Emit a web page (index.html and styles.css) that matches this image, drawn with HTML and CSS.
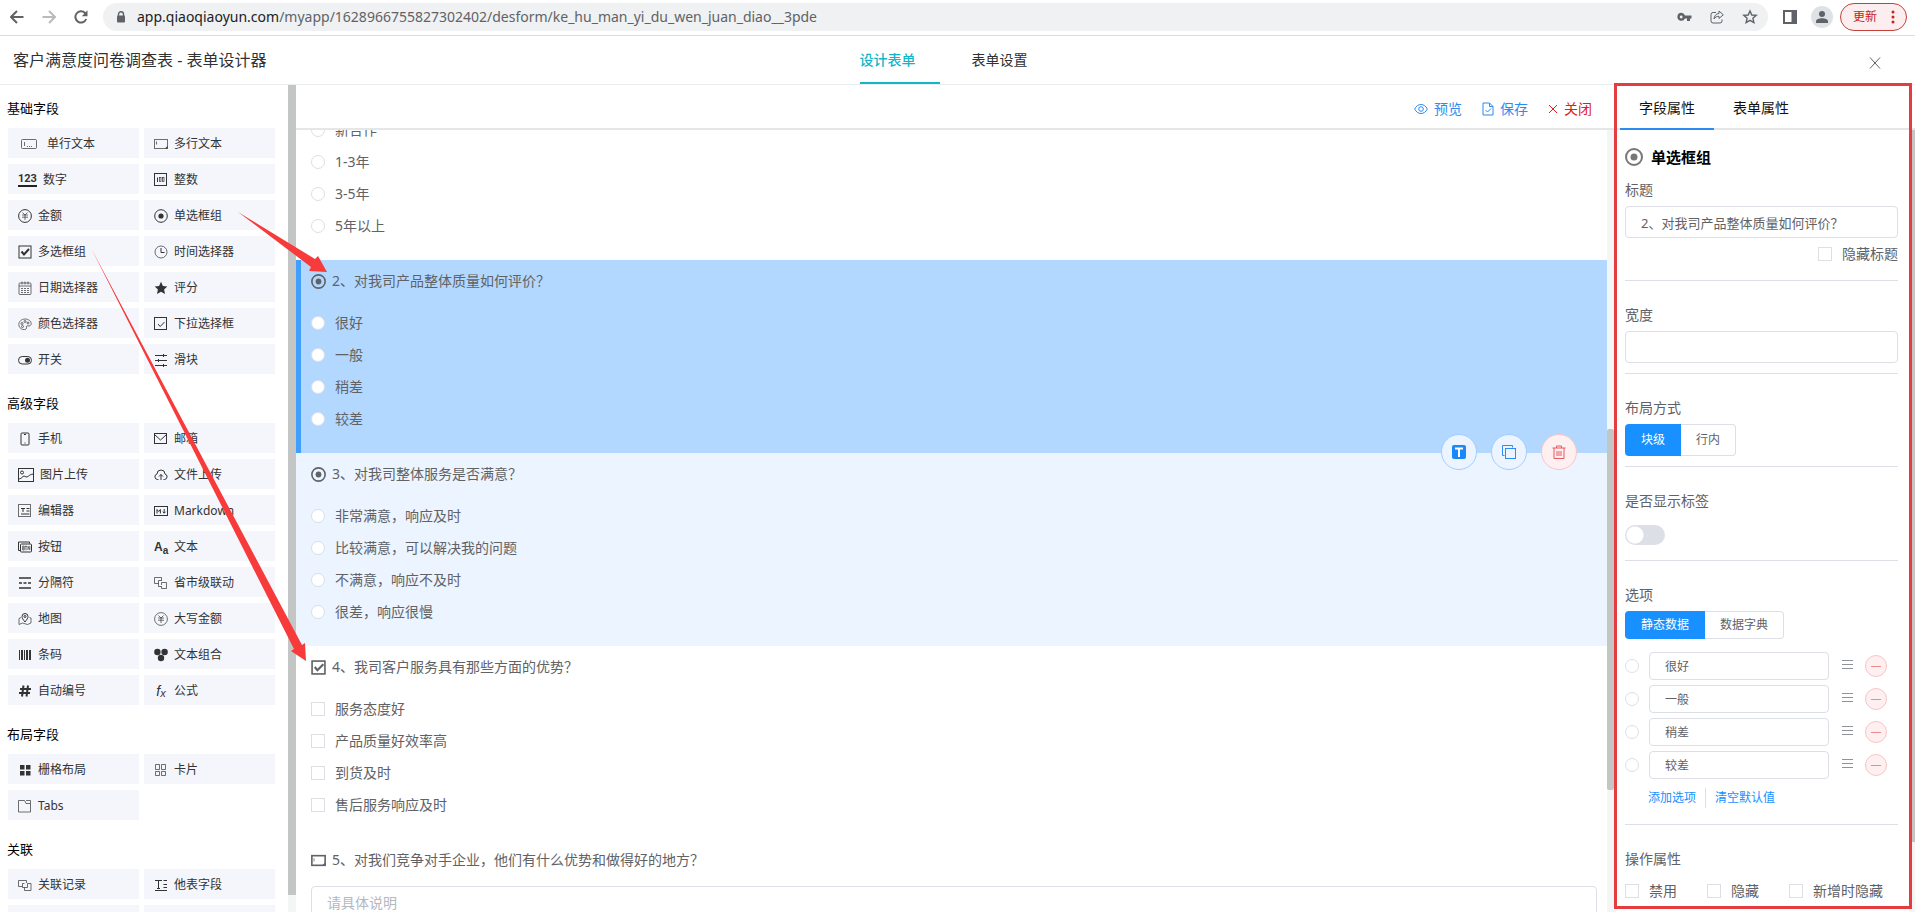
FILE: index.html
```html
<!DOCTYPE html>
<html lang="zh-CN">
<head>
<meta charset="utf-8">
<title>客户满意度问卷调查表 - 表单设计器</title>
<link rel="stylesheet" href="styles.css">
</head>
<body>
<div class="browser-bar">
  <button class="nav-btn" aria-label="后退"><svg width="14" height="14" viewBox="0 0 14 14"><path d="M13.500 7H1.500M7 1L1 7l6 6" class="ln2"/></svg></button>
  <button class="nav-btn nav-off" aria-label="前进"><svg width="14" height="14" viewBox="0 0 14 14"><path d="M.5 7h12M7 1l6 6-6 6" class="ln2"/></svg></button>
  <button class="nav-btn" aria-label="刷新"><svg width="14" height="14" viewBox="0 0 14 14"><path d="M12.200 9A5.600 5.600 0 1 1 11 3l1 1" class="ln2"/><path d="M13.500.3v6H7.800z" fill="currentColor"/></svg></button>
  <div class="url">
    <svg width="10" height="12" viewBox="0 0 10 12"><path d="M2.500 5V3.300a2.500 2.500 0 0 1 5 0V5" fill="none" stroke="currentColor" stroke-width="1.400"/><rect x="1" y="4.500" width="8" height="7" rx="1" fill="currentColor"/></svg>
    <span class="url-text"><span class="url-host">app.qiaoqiaoyun.com</span>/myapp/1628966755827302402/desform/ke_hu_man_yi_du_wen_juan_diao__3pde</span>
    <svg width="15" height="14" viewBox="0 0 15 14"><path fill="currentColor" fill-rule="evenodd" d="M4.200 2.800A4 4 0 0 1 8 5.500h6.500v3H13V11h-3V8.500H8a4 4 0 1 1-3.800-5.700zm0 2.800a1.400 1.400 0 1 0 0 2.800 1.400 1.400 0 0 0 0-2.800z"/></svg>
    <svg width="14" height="14" viewBox="0 0 14 14"><path d="M6 2.500H3a2 2 0 0 0-2 2V11a2 2 0 0 0 2 2h7a2 2 0 0 0 2-2V9.500" class="ln"/><path d="M9 1l4.300 3.800L9 8.500V6.300C6.500 6.300 5 7.300 4 9c.2-3 2-5.300 5-5.600z" class="ln"/></svg>
    <svg width="16" height="16" viewBox="0 0 16 16"><path d="M8 2l1.800 4 4.400.4-3.300 2.900 1 4.300L8 11.300l-3.900 2.300 1-4.300L1.800 6.400 6.200 6z" fill="none" stroke="currentColor" stroke-width="1.400"/></svg>
  </div>
  <button class="nav-btn" aria-label="侧边栏"><svg width="14" height="14" viewBox="0 0 14 14"><rect x="1" y="1" width="12" height="12" fill="none" stroke="currentColor" stroke-width="2"/><path d="M8.500 1H13v12H8.500z" fill="currentColor"/></svg></button>
  <button class="avatar" aria-label="用户"><svg width="14" height="14" viewBox="0 0 14 14"><circle cx="7" cy="4" r="3" fill="currentColor"/><path d="M1 13v-1.500C1 9.500 4 8.300 7 8.300s6 1.200 6 3.200V13z" fill="currentColor"/></svg></button>
  <button class="update">更新<svg width="4" height="16" viewBox="0 0 4 16" fill="currentColor"><circle cx="2" cy="3" r="1.500"/><circle cx="2" cy="8" r="1.500"/><circle cx="2" cy="13" r="1.500"/></svg></button>
</div>

<header class="app-header">
  <h1>客户满意度问卷调查表 - 表单设计器</h1>
  <nav class="main-tabs">
    <button class="main-tab main-tab-on">设计表单</button>
    <button class="main-tab">表单设置</button>
  </nav>
  <button class="close-page" aria-label="关闭页面"><svg width="12" height="12" viewBox="0 0 12 12"><path d="M1 .5l10 11M11 .5l-10 11" class="ln"/></svg></button>
</header>

<main class="workspace">
  <aside class="palette">
    <h2>基础字段</h2>
    <div class="field-grid">
      <button class="field field-indent"><svg width="16" height="10" viewBox="0 0 16 10"><rect x=".5" y=".5" width="15" height="9" rx="1" class="ln soft"/><path d="M3.500 3v4M6 7.500h1M8 7.500h1M10 7.500h1" class="ln soft"/></svg>单行文本</button>
      <button class="field"><svg width="14" height="14" viewBox="0 0 14 14"><rect x=".5" y="2.500" width="13" height="9" class="ln soft"/><path d="M2.500 4.500v3" class="ln soft"/><path d="M13.500 9v2.500H11z" fill="currentColor"/></svg>多行文本</button>
      <button class="field"><span class="icon-123" aria-hidden="true">123</span>数字</button>
      <button class="field"><svg width="14" height="14" viewBox="0 0 14 14"><rect x=".5" y=".5" width="12" height="12" class="ln"/><path d="M3.500 4.500v4.500" class="ln"/><rect x="5.500" y="4.500" width="1.500" height="4" class="ln thin"/><rect x="8.500" y="4.500" width="1.500" height="4" class="ln thin"/></svg>整数</button>
      <button class="field"><svg width="14" height="14" viewBox="0 0 14 14"><circle cx="7" cy="7" r="6.400" class="ln"/><path d="M4.500 3.500L7 6l2.500-2.500M4 6h6M4 8.200h6M7 6v5" class="ln thin"/></svg>金额</button>
      <button class="field"><svg width="14" height="14" viewBox="0 0 14 14"><circle cx="7" cy="7" r="6.300" class="ln"/><circle cx="7" cy="7" r="2.600" fill="currentColor"/></svg>单选框组</button>
      <button class="field"><svg width="14" height="14" viewBox="0 0 14 14"><rect x="1" y="1" width="12" height="12" class="ln"/><path d="M3.500 6.500L6 9.500 11 4" class="ln2"/></svg>多选框组</button>
      <button class="field"><svg width="14" height="14" viewBox="0 0 14 14"><circle cx="7" cy="7" r="6" class="ln soft"/><path d="M7 3v4.500h3.500" class="ln"/></svg>时间选择器</button>
      <button class="field"><svg width="14" height="14" viewBox="0 0 14 14"><rect x="1" y="2" width="12" height="11.500" rx="1" class="ln soft"/><path d="M1 5h12M4 .5v3M7 .5v3M10 .5v3M3 7.500h2M6 7.500h2M9 7.500h2M3 9.500h2M6 9.500h2M9 9.500h2M3 11.500h2M6 11.500h2M9 11.500h2" class="ln soft"/></svg>日期选择器</button>
      <button class="field"><svg width="14" height="14" viewBox="0 0 14 14"><path d="M7 .8l1.900 4.100 4.400.5-3.200 3.100.9 4.500-4-2.200L3 13l.9-4.500L.7 5.400l4.400-.5z" fill="currentColor"/></svg>评分</button>
      <button class="field"><svg width="14" height="14" viewBox="0 0 14 14"><path d="M5 12.500C2.500 12 .8 9.800.8 7.500.8 4.500 3.600 2 7 2s6.200 2 6.200 4.700c0 1.800-1.600 2.500-3.200 2.200C8.500 8.600 8 9.500 8.500 10.300 9.200 11.600 7.500 13 5 12.500z" class="ln thin"/><circle cx="4" cy="6.500" r="1" class="ln thin"/><circle cx="7" cy="4.500" r="1" class="ln thin"/><circle cx="10" cy="6" r="1" class="ln thin"/><circle cx="4.500" cy="9.500" r="1" class="ln thin"/></svg>颜色选择器</button>
      <button class="field"><svg width="14" height="14" viewBox="0 0 14 14"><rect x=".5" y=".5" width="12" height="12" class="ln"/><path d="M4 7l2.200 2.500L10.500 5" class="ln"/></svg>下拉选择框</button>
      <button class="field"><svg width="14" height="14" viewBox="0 0 14 14"><rect x=".5" y="3.500" width="13" height="7.500" rx="3.700" class="ln"/><circle cx="9.500" cy="7.200" r="2.500" fill="currentColor"/></svg>开关</button>
      <button class="field"><svg width="14" height="14" viewBox="0 0 14 14"><path d="M1 2.500h12M1 7.500h12M1 12.500h12M9.500 1v3M4.500 6v3M9.500 11v3" class="ln"/></svg>滑块</button>
    </div>
    <h2>高级字段</h2>
    <div class="field-grid">
      <button class="field"><svg width="14" height="14" viewBox="0 0 14 14"><rect x="3" y="1" width="8" height="12" rx="1" class="ln"/><path d="M6 2.500h2M6.500 11h1" class="ln"/></svg>手机</button>
      <button class="field"><svg width="14" height="14" viewBox="0 0 14 14"><rect x=".5" y="1.500" width="12" height="10" class="ln"/><path d="M.5 2.500l6 5.500 6-5.500" class="ln"/></svg>邮箱</button>
      <button class="field"><svg width="16" height="14" viewBox="0 0 16 14"><rect x=".5" y=".5" width="15" height="13" class="ln"/><circle cx="4" cy="4.500" r="1.500" class="ln"/><path d="M.5 11c2 0 3-1 4.500-2.500s2.500 1 4 .5S12 6 15.500 6" class="ln"/></svg>图片上传</button>
      <button class="field"><svg width="14" height="14" viewBox="0 0 14 14"><path d="M4.500 11.500h-1A2.800 2.800 0 0 1 3 6a4 4 0 0 1 8 0 2.800 2.800 0 0 1-.5 5.500h-1M7 12V6.500M5 8.500l2-2 2 2" class="ln"/></svg>文件上传</button>
      <button class="field"><svg width="14" height="14" viewBox="0 0 14 14"><rect x=".5" y=".5" width="12" height="12" class="ln soft"/><path d="M3 4.500h4M5 4.500V8M8.500 4.500h3M8.500 7h3M3 10h8.500" class="ln"/></svg>编辑器</button>
      <button class="field"><svg width="14" height="14" viewBox="0 0 14 14"><rect x=".5" y="2.500" width="13" height="9" class="ln"/><path d="M3 9.500V5.500l1.700 2 1.700-2v4M10.200 5v4M8.700 7.700l1.500 1.500 1.500-1.500" class="ln"/></svg>Markdown</button>
      <button class="field"><svg width="14" height="14" viewBox="0 0 14 14"><path d="M2 10.500H.5V2h11v1.500" class="ln"/><rect x="2.500" y="4" width="11" height="8" rx="1" class="ln"/><path d="M4.700 6v4h1.500V6H4.700M4.700 8h1.500M7 6.300h2M8 6.300v4M10 10V6.300l1.800 3.400V6" class="ln thin"/></svg>按钮</button>
      <button class="field"><span class="icon-aa" aria-hidden="true">A<sub>a</sub></span>文本</button>
      <button class="field"><svg width="14" height="14" viewBox="0 0 14 14"><path d="M1 2h12M1 12h12M1 7h3M5.500 7h3M10 7h3" class="ln bold"/></svg>分隔符</button>
      <button class="field"><svg width="14" height="14" viewBox="0 0 14 14"><path d="M4.500 7.500h-4v-6h7V5" class="ln soft"/><path d="M7 4.500H4.500v6H7" class="ln soft"/><path d="M7.500 9V6.500H12.500v6h-5V10" class="ln soft"/></svg>省市级联动</button>
      <button class="field"><svg width="14" height="14" viewBox="0 0 14 14"><path d="M3 5.500L1 6.500v6l3.500-1.500 5 1.500 3.500-1.500V6l-1.500-.5" class="ln soft"/><path d="M7 10C5 7.500 4 6 4 4.500a3 3 0 0 1 6 0C10 6 9 7.500 7 10z" class="ln"/><circle cx="7" cy="4.500" r="1" class="ln"/></svg>地图</button>
      <button class="field"><svg width="14" height="14" viewBox="0 0 14 14"><circle cx="7" cy="7" r="6.400" class="ln thin"/><path d="M4.500 3.500L7 6l2.500-2.500M4 6h6M4 8.200h6M7 6v5" class="ln thin"/></svg>大写金额</button>
      <button class="field"><svg width="14" height="14" viewBox="0 0 14 14"><path d="M1 2h1v10H1zM3 2h2v10H3zM6 2h1v10H6zM8 2h2v10H8zM11 2h2v10h-2z" fill="currentColor"/></svg>条码</button>
      <button class="field"><svg width="14" height="14" viewBox="0 0 14 14"><g fill="currentColor"><circle cx="3.400" cy="4" r="3.200"/><circle cx="10.600" cy="4" r="3.200"/><circle cx="7" cy="10" r="3.200"/></g></svg>文本组合</button>
      <button class="field"><svg width="14" height="14" viewBox="0 0 14 14"><path d="M5.500 1.500l-1.500 11M10 1.500l-1.500 11M2 5h11M1 9h11" class="ln2"/></svg>自动编号</button>
      <button class="field"><span class="icon-fx" aria-hidden="true">f<sub>x</sub></span>公式</button>
    </div>
    <h2>布局字段</h2>
    <div class="field-grid">
      <button class="field"><svg width="14" height="14" viewBox="0 0 14 14"><path d="M2 2h4.500v4.500H2zM8 2h4.500v4.500H8zM2 8h4.500v4.500H2zM8 8h4.500v4.500H8z" fill="currentColor"/></svg>栅格布局</button>
      <button class="field"><svg width="14" height="14" viewBox="0 0 14 14"><path d="M1.500 1.500h4v5h-4zM1.500 8.500h4v4h-4zM7.500 1.500h4v5h-4zM7.500 8.500h4v4h-4z" class="ln soft"/></svg>卡片</button>
      <button class="field"><svg width="14" height="14" viewBox="0 0 14 14"><path d="M.5 1.500h6l1.500 3h4.500v8.500H.5zM8 1.500h4.500v3" class="ln soft"/></svg>Tabs</button>
    </div>
    <h2>关联</h2>
    <div class="field-grid">
      <button class="field"><svg width="14" height="14" viewBox="0 0 14 14"><path d="M4 8.500H.5v-6h8V5" class="ln soft"/><path d="M6.500 5.500h-2v4h5v-4h3.500v7H6.500V9.500" class="ln soft"/></svg>关联记录</button>
      <button class="field"><svg width="14" height="14" viewBox="0 0 14 14"><path d="M1 2.500h7M4.500 2.500v8M3 10.500h3M9.500 2.500H13M9.500 6.500H13M9.500 9.500H13M1 12.500h12" class="ln"/></svg>他表字段</button>
      <button class="field" aria-label="更多字段一"></button>
      <button class="field" aria-label="更多字段二"></button>
    </div>
    <div class="track track-palette"><div class="thumb thumb-palette"></div></div>
  </aside>

  <section class="canvas">
    <div class="toolbar">
      <button class="tool"><svg width="14" height="12" viewBox="0 0 14 12"><path d="M.7 6C2 3.200 4.300 1.500 7 1.500S12 3.200 13.300 6C12 8.800 9.700 10.500 7 10.500S2 8.800.7 6z" class="ln"/><circle cx="7" cy="6" r="2.300" class="ln"/></svg>预览</button>
      <button class="tool"><svg width="12" height="14" viewBox="0 0 12 14"><path d="M1 1h6.500L11 4.500V13H1zM7.500 1v3.500H11M3.500 8l2 2L9 6.500" class="ln"/></svg>保存</button>
      <button class="tool tool-close"><svg width="10" height="10" viewBox="0 0 10 10"><path d="M1 1l8 8M9 1L1 9" class="ln"/></svg>关闭</button>
    </div>
    <div class="canvas-body">
      <div class="questions">
        <div class="question question-first">
          <div class="options">
            <label class="opt"><input type="radio" name="q1">新合作</label>
            <label class="opt"><input type="radio" name="q1">1-3年</label>
            <label class="opt"><input type="radio" name="q1">3-5年</label>
            <label class="opt"><input type="radio" name="q1">5年以上</label>
          </div>
        </div>
        <div class="question question-active">
          <div class="q-title"><svg width="15" height="15" viewBox="0 0 14 14"><circle cx="7" cy="7" r="6.200" class="ln bold"/><circle cx="7" cy="7" r="2.700" fill="currentColor"/></svg>2、对我司产品整体质量如何评价？</div>
          <div class="options">
            <label class="opt"><input type="radio" name="q2">很好</label>
            <label class="opt"><input type="radio" name="q2">一般</label>
            <label class="opt"><input type="radio" name="q2">稍差</label>
            <label class="opt"><input type="radio" name="q2">较差</label>
          </div>
          <div class="actions">
            <button class="act" aria-label="标题"><svg width="14" height="14" viewBox="0 0 14 14"><rect width="14" height="14" rx="2" fill="#1989fa"/><path d="M3 3.500h8M7 3.500V12" stroke="#fff" stroke-width="2" fill="none"/></svg></button>
            <button class="act" aria-label="复制"><svg width="14" height="14" viewBox="0 0 14 14"><path d="M2.500 10.500h-2V.5h10v2" class="ln"/><rect x="3.500" y="3.500" width="10" height="10" class="ln"/></svg></button>
            <button class="act act-del" aria-label="删除"><svg width="14" height="14" viewBox="0 0 14 14"><path d="M.5 3h13M4.500 3V1h5v2M2 3v10.500h10V3M5 6v5M7 6v5M9 6v5" class="ln"/></svg></button>
          </div>
        </div>
        <div class="question question-hover">
          <div class="q-title"><svg width="15" height="15" viewBox="0 0 14 14"><circle cx="7" cy="7" r="6.200" class="ln bold"/><circle cx="7" cy="7" r="2.700" fill="currentColor"/></svg>3、对我司整体服务是否满意？</div>
          <div class="options">
            <label class="opt"><input type="radio" name="q3">非常满意，响应及时</label>
            <label class="opt"><input type="radio" name="q3">比较满意，可以解决我的问题</label>
            <label class="opt"><input type="radio" name="q3">不满意，响应不及时</label>
            <label class="opt"><input type="radio" name="q3">很差，响应很慢</label>
          </div>
        </div>
        <div class="question">
          <div class="q-title"><svg width="15" height="15" viewBox="0 0 14 14"><rect x="1" y="1" width="12" height="12" class="ln bold"/><path d="M3.500 6.500L6 9.500 11.500 4" class="ln2"/></svg>4、我司客户服务具有那些方面的优势？</div>
          <div class="options">
            <label class="opt"><input type="checkbox">服务态度好</label>
            <label class="opt"><input type="checkbox">产品质量好效率高</label>
            <label class="opt"><input type="checkbox">到货及时</label>
            <label class="opt"><input type="checkbox">售后服务响应及时</label>
          </div>
        </div>
        <div class="question question-text">
          <label class="q-title" for="q5"><svg width="15" height="15" viewBox="0 0 14 14"><rect x=".8" y="2.500" width="12.400" height="9" class="ln bold"/><path d="M2.800 5v3" class="ln soft"/><path d="M13 9V11.500H10.500z" fill="currentColor"/></svg>5、对我们竞争对手企业，他们有什么优势和做得好的地方？</label>
          <textarea id="q5" placeholder="请具体说明"></textarea>
        </div>
      </div>
      <div class="track track-canvas"><div class="thumb thumb-canvas"></div></div>
    </div>
  </section>

  <aside class="props">
    <div class="prop-tabs">
      <button class="prop-tab prop-tab-on">字段属性</button>
      <button class="prop-tab">表单属性</button>
    </div>
    <div class="prop-body">
      <h3><svg width="18" height="18" viewBox="0 0 18 18"><circle cx="9" cy="9" r="8" class="ln2"/><circle cx="9" cy="9" r="3.500" fill="currentColor"/></svg>单选框组</h3>
      <div class="prop">
        <label class="prop-label" for="p-title">标题</label>
        <input class="text" id="p-title" type="text" value="2、对我司产品整体质量如何评价？">
        <label class="opt opt-right"><input type="checkbox">隐藏标题</label>
      </div>
      <div class="prop">
        <label class="prop-label" for="p-width">宽度</label>
        <input class="text" id="p-width" type="text">
      </div>
      <div class="prop">
        <div class="prop-label">布局方式</div>
        <div class="segment"><button class="seg seg-on">块级</button><button class="seg">行内</button></div>
      </div>
      <div class="prop prop-switch">
        <label class="prop-label" for="p-show">是否显示标签</label>
        <input class="switch" id="p-show" type="checkbox" role="switch">
      </div>
      <div class="prop prop-options">
        <div class="prop-label">选项</div>
        <div class="segment segment-small"><button class="seg seg-on">静态数据</button><button class="seg">数据字典</button></div>
        <div class="choice-list">
          <div class="choice"><input type="radio" name="def" aria-label="默认很好"><input class="text" type="text" value="很好" aria-label="选项一"><svg width="12" height="14" viewBox="0 0 12 14"><path d="M0 1.500h11M0 5.500h11M0 9.500h11" class="ln"/></svg><button class="remove" aria-label="删除选项一"></button></div>
          <div class="choice"><input type="radio" name="def" aria-label="默认一般"><input class="text" type="text" value="一般" aria-label="选项二"><svg width="12" height="14" viewBox="0 0 12 14"><path d="M0 1.500h11M0 5.500h11M0 9.500h11" class="ln"/></svg><button class="remove" aria-label="删除选项二"></button></div>
          <div class="choice"><input type="radio" name="def" aria-label="默认稍差"><input class="text" type="text" value="稍差" aria-label="选项三"><svg width="12" height="14" viewBox="0 0 12 14"><path d="M0 1.500h11M0 5.500h11M0 9.500h11" class="ln"/></svg><button class="remove" aria-label="删除选项三"></button></div>
          <div class="choice"><input type="radio" name="def" aria-label="默认较差"><input class="text" type="text" value="较差" aria-label="选项四"><svg width="12" height="14" viewBox="0 0 12 14"><path d="M0 1.500h11M0 5.500h11M0 9.500h11" class="ln"/></svg><button class="remove" aria-label="删除选项四"></button></div>
        </div>
        <div class="links"><a href="#">添加选项</a><a href="#">清空默认值</a></div>
      </div>
      <div class="prop prop-last">
        <div class="prop-label">操作属性</div>
        <div class="checks">
          <label class="opt"><input type="checkbox">禁用</label>
          <label class="opt"><input type="checkbox">隐藏</label>
          <label class="opt"><input type="checkbox">新增时隐藏</label>
        </div>
      </div>
    </div>
    <div class="track track-props"><div class="thumb thumb-props"></div></div>
    <div class="frame"></div>
  </aside>
</main>

<svg class="arrows" width="340" height="670" viewBox="0 0 340 670" aria-hidden="true">
  <path d="M238 212L315 259L318 256L327 272L309 271L311 267z"/>
  <path d="M91 248L302 645L305 643L306 661L291 651L294 649z"/>
</svg>
</body>
</html>
```
FILE: styles.css
```css
* { box-sizing: border-box; }

body {
  margin: 0;
  height: 100vh;
  display: flex;
  flex-direction: column;
  overflow: hidden;
  position: relative;
  background: #fff;
  color: #606266;
  font: 14px/20px "Noto Sans", "Noto Sans CJK SC", sans-serif;
}

button, input, textarea { font: inherit; color: inherit; margin: 0; }
button { border: 0; padding: 0; background: none; cursor: pointer; }
svg { display: block; flex: none; }

.ln, .ln2 { fill: none; stroke: currentColor; stroke-width: 1; }
.ln2 { stroke-width: 2; }
.bold { stroke-width: 1.5; }
.thin { stroke-width: 0.7; }
.soft { opacity: 0.7; }

/* browser bar */
.browser-bar {
  flex: none;
  height: 36px;
  display: flex;
  align-items: center;
  padding: 0 8px 2px 10px;
  border-bottom: 1px solid #dadce0;
  color: #5f6368;
}
.nav-btn { width: 14px; margin-right: 18px; }
.nav-btn:nth-child(3) { margin-right: 15px; }
.nav-off { color: #b9bbbe; }
.url {
  flex: 1;
  height: 28px;
  display: flex;
  align-items: center;
  gap: 18px;
  padding: 0 10px 0 13px;
  margin-right: 15px;
  border-radius: 14px;
  background: #eff1f2;
}
.url-text { flex: 1; margin-left: -7px; }
.url-host { color: #202124; }
.avatar {
  width: 22px;
  height: 22px;
  display: grid;
  place-items: center;
  margin-right: 7px;
  margin-left: -4px;
  border-radius: 50%;
  background: #dee1e6;
}
.update {
  height: 28px;
  display: flex;
  align-items: center;
  gap: 14px;
  padding: 0 11px 0 12px;
  border: 1px solid #c5403a;
  border-radius: 14px;
  background: #fceeee;
  color: #c5221f;
  font-size: 12px;
}

/* page header */
.app-header {
  flex: none;
  height: 49px;
  display: grid;
  grid-template-columns: 1fr auto 1fr;
  align-items: center;
  border-bottom: 1px solid #ebeef0;
}
.app-header h1 { margin: 0; padding-left: 13px; font-size: 16px; font-weight: 400; color: #303133; }
.main-tabs { display: flex; gap: 32px; align-self: stretch; }
.main-tab { width: 84px; padding-top: 2px; text-align: left; color: #303133; border-bottom: 2px solid transparent; }
.main-tab-on { width: 80px; color: #13b5c8; border-color: #13b5c8; font-weight: 500; }
.close-page { justify-self: end; margin-right: 34px; padding-top: 6px; color: #606266; }

/* workspace columns */
.workspace {
  flex: 1;
  min-height: 0;
  display: grid;
  grid-template-columns: 296px minmax(0, 1fr) 301px;
}
.track { position: absolute; background: #f4f5f5; }
.thumb { background: #c4c6c6; }

.palette { position: relative; overflow: hidden; padding: 13px 21px 0 7px; }
.palette h2 { margin: 0 0 10px; font-size: 13px; line-height: 20px; font-weight: 400; color: #000; }
.field-grid { display: grid; grid-template-columns: 1fr 1fr; gap: 6px 5px; padding-left: 1px; margin-bottom: 19px; }
.field {
  height: 30px;
  display: flex;
  align-items: center;
  gap: 6px;
  padding: 1px 10px 0;
  background: #f4f6fc;
  color: #333;
  font-size: 12px;
}
.field-indent { padding-left: 13px; gap: 10px; }
.icon-123 {
  border-bottom: 2px solid #222;
  font: bold 11px/12px "Roboto", sans-serif;
}
.icon-aa { width: 14px; font: bold 12px/14px "Liberation Sans", sans-serif; white-space: nowrap; }
.icon-aa sub { font-size: 10px; line-height: 0; }
.icon-fx { width: 14px; font: italic 14px/14px "Liberation Sans", sans-serif; }
.icon-fx sub { font-size: 11px; line-height: 0; vertical-align: -1px; }
.track-palette { right: 0; top: 0; bottom: 0; width: 8px; }
.thumb-palette { height: 98%; }

/* form canvas */
.canvas { display: flex; flex-direction: column; min-height: 0; }
.toolbar {
  flex: none;
  height: 45px;
  display: flex;
  justify-content: flex-end;
  gap: 20px;
  padding: 4px 22px 0 0;
  border-bottom: 2px solid #e4e6e8;
  color: #2d8cf0;
}
.tool { display: flex; align-items: center; gap: 6px; }
.tool-close { color: #e02020; }
.canvas-body { flex: 1; min-height: 0; position: relative; overflow: hidden; padding-right: 7px; }
.questions { margin-top: -16px; }
.question { position: relative; padding: 5px 10px 18px 15px; }
.question-first { padding-top: 0; }
.question-active { z-index: 1; padding-left: 10px; border-left: 5px solid #409eff; background: #b3d8ff; }
.question-hover { background: #ebf4ff; }
.q-title { display: flex; align-items: center; gap: 6px; height: 32px; margin-bottom: 10px; }
.opt { display: flex; align-items: center; gap: 10px; height: 32px; white-space: nowrap; }
input[type="radio"], input[type="checkbox"]:not(.switch) {
  appearance: none;
  flex: none;
  width: 14px;
  height: 14px;
  border: 1px solid #dcdfe6;
  background: #fff;
}
input[type="radio"] { border-radius: 50%; }
.question-text textarea {
  display: block;
  width: 100%;
  height: 54px;
  padding: 6px 15px;
  border: 1px solid #dcdfe6;
  border-radius: 4px;
  resize: none;
}
textarea::placeholder { color: #b4b8bf; }
.actions { position: absolute; right: 30px; bottom: -17px; display: flex; gap: 14px; }
.act {
  width: 36px;
  height: 36px;
  display: grid;
  place-items: center;
  border: 1px solid #9fceff;
  border-radius: 50%;
  background: #ecf5ff;
  color: #2d8cf0;
}
.act-del { border-color: #fbc4c4; background: #fef0f0; color: #e8595e; }
.track-canvas { right: 0; top: 0; bottom: 0; width: 7px; padding-top: 299px; }
.thumb-canvas { height: 361px; border-radius: 2px; }

/* properties panel */
.props { position: relative; min-height: 0; }
.prop-tabs { display: flex; height: 45px; padding-left: 6px; border-bottom: 2px solid #e4e6e8; }
.prop-tab { height: 45px; padding: 2px 19px 0; color: #111; border-bottom: 2px solid transparent; }
.prop-tab-on { border-color: #2d8cf0; }
.prop-body { padding: 10px 17px 0 11px; }
.props h3 {
  display: flex;
  align-items: center;
  gap: 8px;
  height: 34px;
  margin: 0;
  color: #000;
  font-size: 15px;
}
.props h3 svg { color: #777; }
.prop { padding-bottom: 10px; margin-bottom: 18px; border-bottom: 1px solid #dcdfe6; }
.prop-label { display: block; line-height: 32px; }
.text {
  display: block;
  width: 100%;
  height: 32px;
  padding: 0 15px;
  border: 1px solid #dcdfe6;
  border-radius: 4px;
  background: #fff;
  font-size: 13px;
}
.opt-right { justify-content: flex-end; }
.segment { display: flex; height: 32px; font-size: 12px; }
.segment-small { height: 28px; }
.seg { padding: 0 15px; border: 1px solid #dcdfe6; border-left: 0; border-radius: 0 4px 4px 0; }
.seg-on { padding: 0 16px; border: 0; border-radius: 4px 0 0 4px; background: #1890ff; color: #fff; }
.prop-switch { padding-bottom: 15px; }
.switch {
  appearance: none;
  display: block;
  width: 40px;
  height: 20px;
  margin-top: 8px;
  border-radius: 10px;
  background: radial-gradient(circle at 10px 10px, #fff 8px, #dcdfe6 9px);
}
.prop-options { padding-bottom: 16px; }
.choice-list { display: grid; gap: 5px; margin: 13px 0 9px; }
.choice { display: flex; align-items: center; color: #606266; }
.choice .text { flex: 1; min-width: 0; height: 28px; margin: 0 13px 0 10px; font-size: 12px; }
.choice svg { color: #909399; }
.remove {
  width: 22px;
  height: 22px;
  margin: 0 11px;
  border: 1px solid #fbc4c4;
  border-radius: 50%;
  background: linear-gradient(#e98a8c, #e98a8c) center / 10px 1px no-repeat #fef0f0;
}
.links { display: flex; padding-left: 23px; font-size: 12px; }
.links a { color: #1890ff; text-decoration: none; }
.links a + a { margin-left: 9px; padding-left: 9px; border-left: 1px solid #dcdfe6; }
.prop-last { border: 0; margin: 0; }
.checks { display: flex; gap: 30px; }
.track-props { right: 0; top: 45px; bottom: 0; width: 6px; }
.thumb-props { height: 712px; }
.frame { position: absolute; inset: -2px 3px 3px 0; border: 3px solid #e53c40; pointer-events: none; }

.arrows { position: absolute; left: 0; top: 0; fill: #f73a3a; pointer-events: none; z-index: 5; }
```
